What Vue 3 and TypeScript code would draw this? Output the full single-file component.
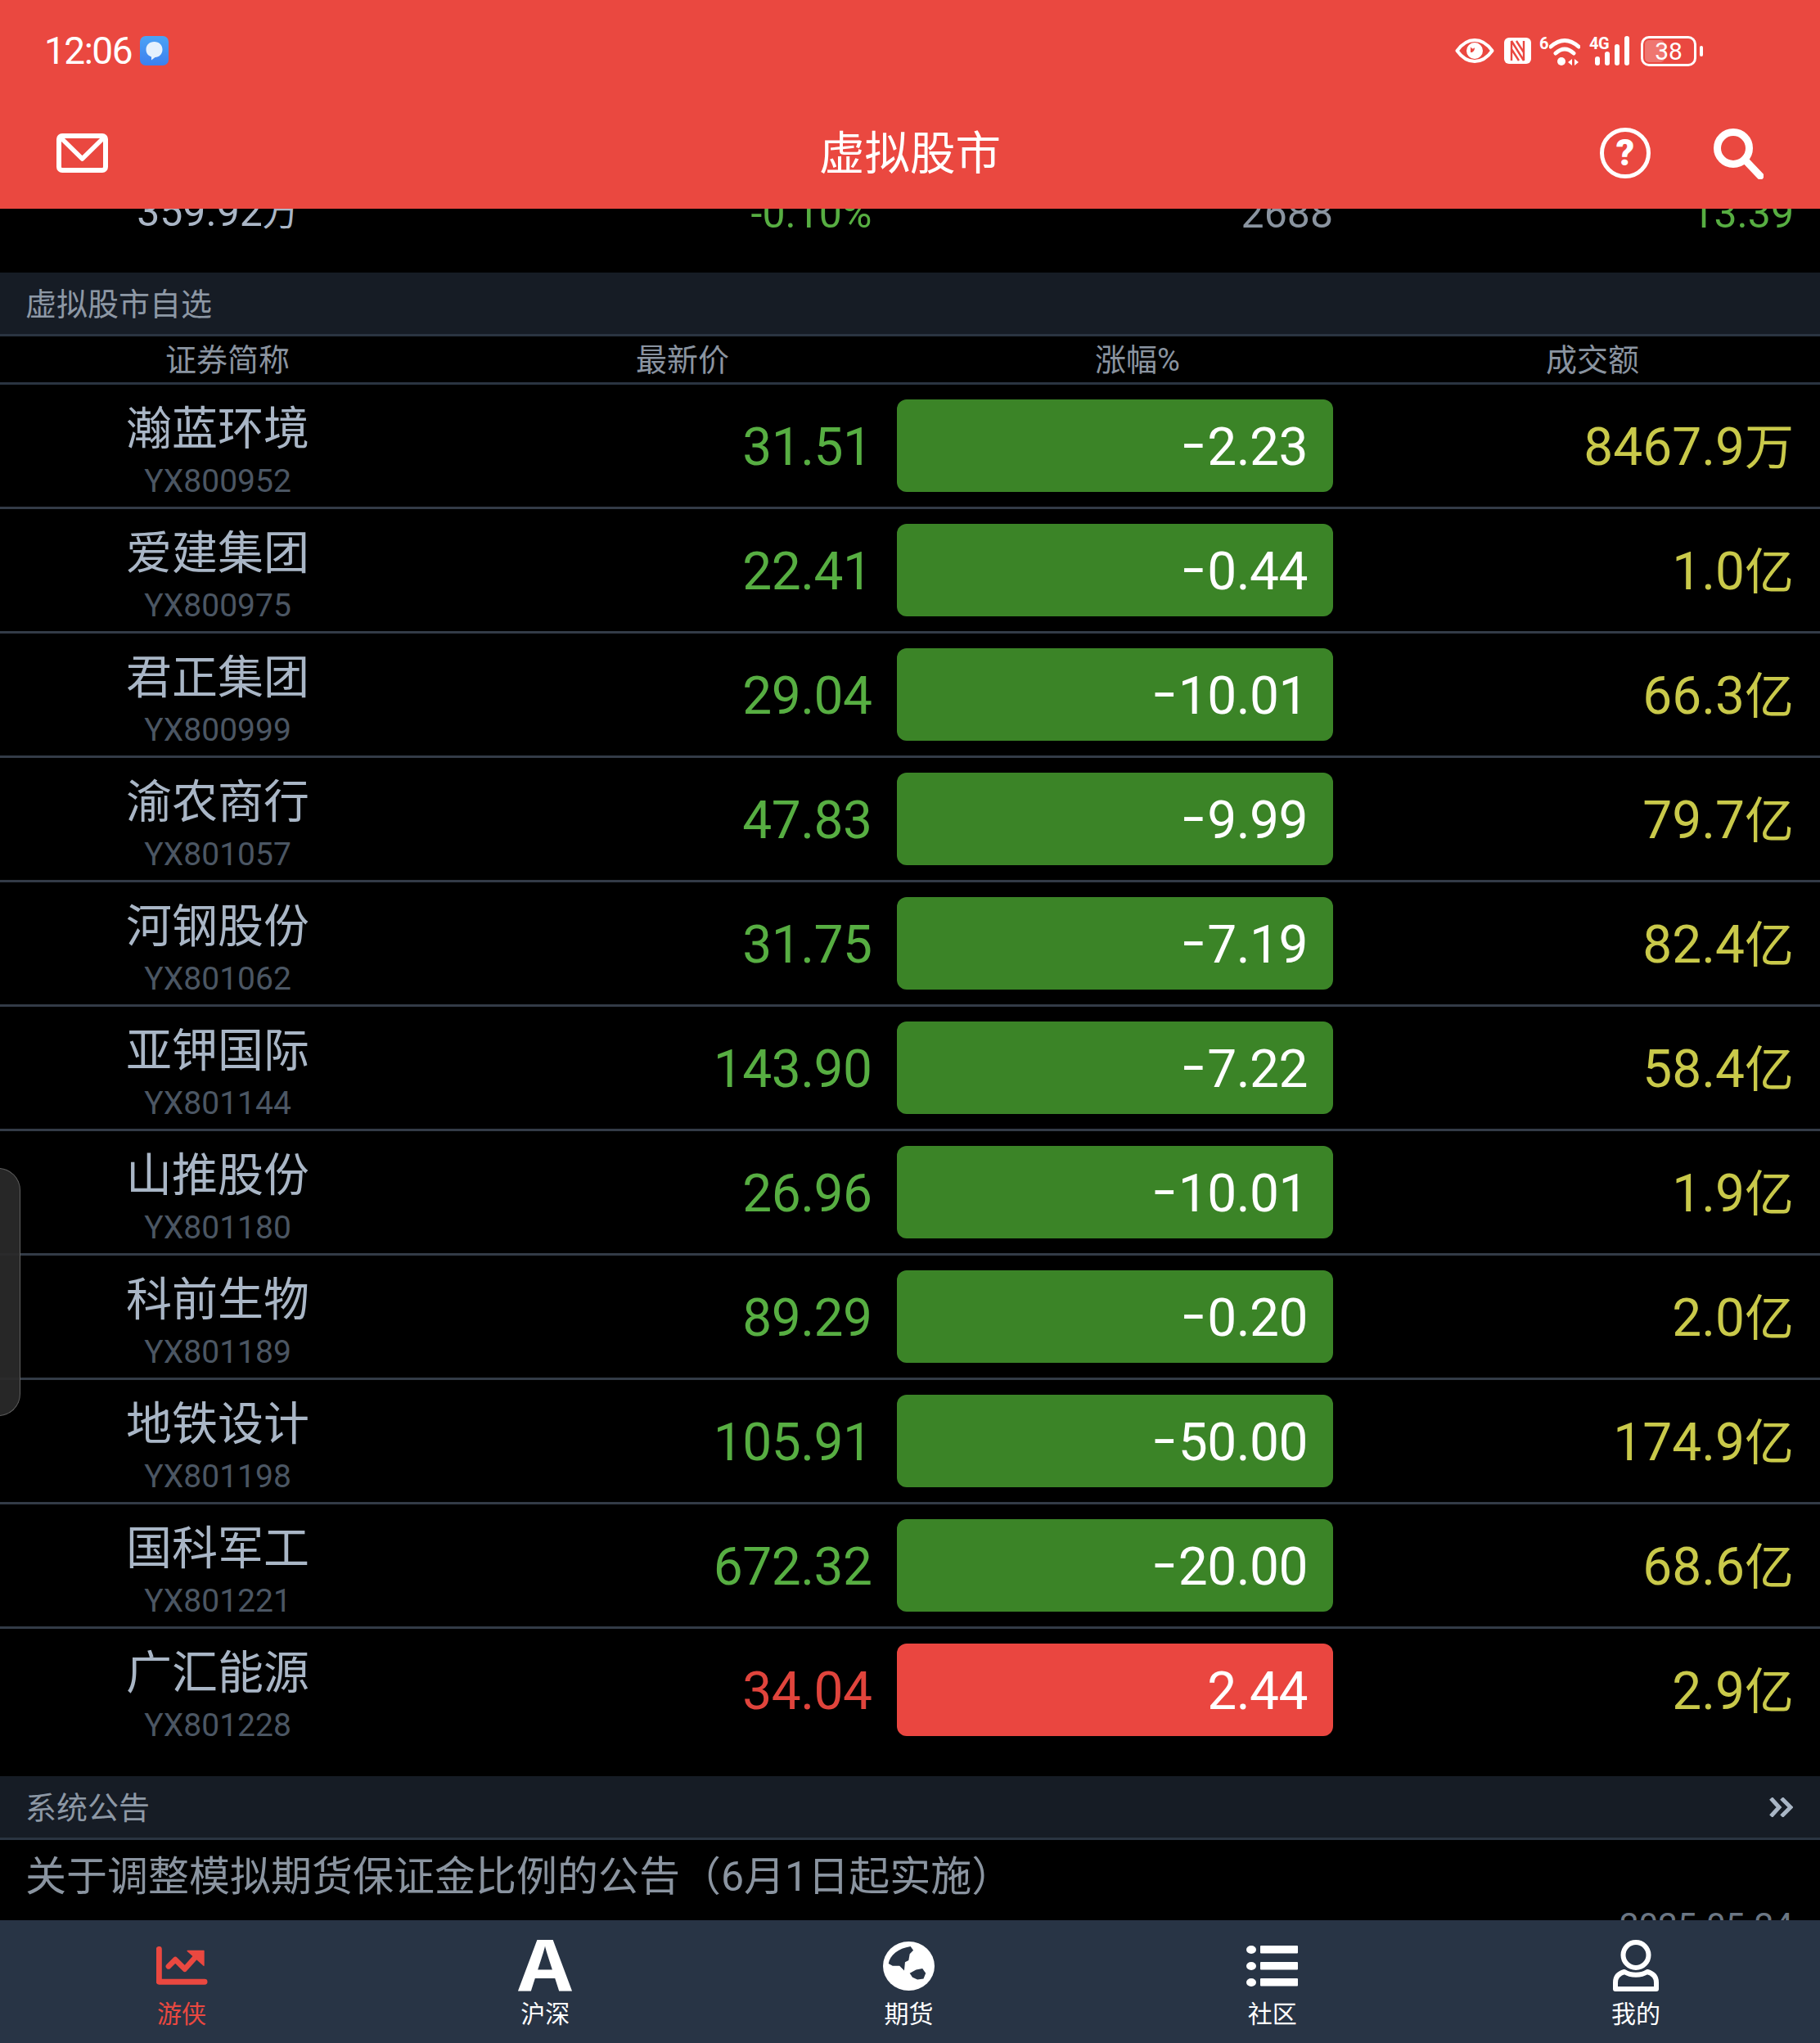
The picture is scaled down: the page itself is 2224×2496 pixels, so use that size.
<script setup lang="ts">
interface Stock {
  name: string
  code: string
  price: string
  change: string
  amount: string
  unit: string
  up?: boolean
}

const stocks: Stock[] = [
  { name: '瀚蓝环境', code: 'YX800952', price: '31.51', change: '-2.23', amount: '8467.9', unit: '万' },
  { name: '爱建集团', code: 'YX800975', price: '22.41', change: '-0.44', amount: '1.0', unit: '亿' },
  { name: '君正集团', code: 'YX800999', price: '29.04', change: '-10.01', amount: '66.3', unit: '亿' },
  { name: '渝农商行', code: 'YX801057', price: '47.83', change: '-9.99', amount: '79.7', unit: '亿' },
  { name: '河钢股份', code: 'YX801062', price: '31.75', change: '-7.19', amount: '82.4', unit: '亿' },
  { name: '亚钾国际', code: 'YX801144', price: '143.90', change: '-7.22', amount: '58.4', unit: '亿' },
  { name: '山推股份', code: 'YX801180', price: '26.96', change: '-10.01', amount: '1.9', unit: '亿' },
  { name: '科前生物', code: 'YX801189', price: '89.29', change: '-0.20', amount: '2.0', unit: '亿' },
  { name: '地铁设计', code: 'YX801198', price: '105.91', change: '-50.00', amount: '174.9', unit: '亿' },
  { name: '国科军工', code: 'YX801221', price: '672.32', change: '-20.00', amount: '68.6', unit: '亿' },
  { name: '广汇能源', code: 'YX801228', price: '34.04', change: '2.44', amount: '2.9', unit: '亿', up: true },
]

const columns = ['证券简称', '最新价', '涨幅%', '成交额']
</script>

<template>
  <div class="page">
    <header class="top">
      <div class="status">
        <div class="status-left">
          <span class="time">12:06</span>
          <svg class="msg" viewBox="0 0 35 36" width="35" height="36">
            <defs>
              <linearGradient id="msgGrad" x1="0" y1="0" x2="0" y2="1">
                <stop offset="0" stop-color="#4aa3f5" />
                <stop offset="1" stop-color="#3d80ef" />
              </linearGradient>
            </defs>
            <rect width="35" height="36" rx="7" fill="url(#msgGrad)" />
            <path d="M17.500 7c6 0 10 4 10 9.500S23.500 26 18.500 26L14 29.500V25.500C10 24 7.500 21 7.500 16.500 7.500 11 11.500 7 17.500 7Z" fill="#e4f1fd" />
          </svg>
        </div>
        <div class="status-right">
          <svg viewBox="0 0 48 30" width="48" height="30">
            <path d="M2.500 15C9 6 16 2 24 2s15 4 21.500 13C39 24 32 28 24 28S9 24 2.500 15Z" fill="none" stroke="#fff" stroke-width="4" stroke-linejoin="round" />
            <circle cx="24" cy="15" r="10" fill="#fff" />
            <path d="M19 10c1 3 4 3 5 1 0 4-2 6-5 6" fill="#ea4840" />
          </svg>
          <svg class="nfc" viewBox="0 0 33 32" width="33" height="32">
            <rect width="33" height="32" rx="6" fill="#fff" />
            <path d="M9 4v24M24 4v24M9 4l15 24M9 14l9 14M15 4l9 14" fill="none" stroke="#ea4840" stroke-width="2.400" />
          </svg>
          <span class="wifi">
            <span class="tiny six">6</span>
            <svg viewBox="0 0 38 34" width="38" height="34">
              <path d="M2 11Q19-4 36 11M8 19Q19 9 30 19" fill="none" stroke="#fff" stroke-width="5" stroke-linecap="round" />
              <circle cx="15" cy="29" r="5" fill="#fff" />
              <path d="M23 30l5-4v8zM31 26l5 4-5 4z" fill="#fff" />
            </svg>
          </span>
          <span class="signal">
            <span class="tiny four">4G</span>
            <svg viewBox="0 0 43 36" width="43" height="36">
              <rect x="0" y="25" width="6" height="11" rx="3" fill="#fff" />
              <rect x="12" y="19" width="6" height="17" rx="3" fill="#fff" />
              <rect x="24" y="10" width="6" height="26" rx="3" fill="#fff" />
              <rect x="36" y="0" width="6" height="36" rx="3" fill="#fff" />
            </svg>
          </span>
          <span class="battery">
            <span class="level"></span>
            <span class="pct">38</span>
            <span class="nub"></span>
          </span>
        </div>
      </div>
      <nav class="nav">
        <div class="nav-left">
          <svg viewBox="0 0 63 48" width="63" height="48">
            <rect x="3" y="3" width="57" height="42" rx="4" fill="none" stroke="#fff" stroke-width="6" />
            <path d="M6 6l25.500 25L57 6" fill="none" stroke="#fff" stroke-width="5.500" stroke-linejoin="round" />
          </svg>
        </div>
        <div class="title">虚拟股市</div>
        <div class="nav-right">
          <span class="help">?</span>
          <svg viewBox="0 0 62 63" width="62" height="63">
            <circle cx="25" cy="25" r="19.500" fill="none" stroke="#fff" stroke-width="9" />
            <path d="M39 39l19 20" stroke="#fff" stroke-width="9" stroke-linecap="round" />
          </svg>
        </div>
      </nav>
    </header>

    <main class="content">
      <div class="grid clipped">
        <span class="c-name cut-main">359.92<span class="cut-unit">万</span></span>
        <span class="c-right cut-green">-0.10%</span>
        <span class="c-right c-third cut-grey">2688</span>
        <span class="c-right c-last cut-green">13.39</span>
      </div>

      <div class="bar-title">虚拟股市自选</div>
      <div class="cols">
        <span v-for="c in columns" :key="c">{{ c }}</span>
      </div>

      <div v-for="(s, i) in stocks" :key="s.code" class="grid row" :class="{ last: i === stocks.length - 1 }">
        <div class="c-name">
          <div class="name">{{ s.name }}</div>
          <div class="code">{{ s.code }}</div>
        </div>
        <div class="c-right num price" :class="s.up ? 'red' : 'green'">{{ s.price }}</div>
        <div class="c-third-wrap">
          <div class="pill num" :class="s.up ? 'pill-up' : 'pill-down'">{{ s.change }}</div>
        </div>
        <div class="c-right c-last num price yellow">{{ s.amount }}<span class="unit">{{ s.unit }}</span></div>
      </div>

      <div class="bar-title notice">
        <span>系统公告</span>
        <svg class="more" viewBox="0 0 29 24" width="29" height="24">
          <path d="M2 1l10 11L2 23M15 1l11 11-11 11" fill="none" stroke="#a9b6c6" stroke-width="5" />
        </svg>
      </div>
      <div class="notice-item">
        <div class="notice-text">关于调整模拟期货保证金比例的公告（6月1日起实施）</div>
        <div class="notice-date">2025-05-24</div>
      </div>
    </main>

    <footer class="tabs">
      <div class="tab active">
        <span class="tab-icon">
          <svg viewBox="90 22 190 144" width="63" height="48">
            <path d="M100 32v120h168" fill="none" stroke="#ea4840" stroke-width="21" stroke-linecap="round" stroke-linejoin="round" />
            <path d="M135 95l25-25 35 35 45-50" fill="none" stroke="#ea4840" stroke-width="20" stroke-linejoin="round" stroke-linecap="round" />
            <path d="M205 38h60v54z" fill="#ea4840" stroke="#ea4840" stroke-width="4" stroke-linejoin="round" />
          </svg>
        </span>
        <span class="tab-label">游侠</span>
      </div>
      <div class="tab">
        <span class="tab-icon">
          <svg class="letter-svg" viewBox="0 0 66 63" width="66" height="63">
            <text class="letter" x="33" y="63" text-anchor="middle" textLength="66" lengthAdjust="spacingAndGlyphs">A</text>
          </svg>
        </span>
        <span class="tab-label">沪深</span>
      </div>
      <div class="tab">
        <span class="tab-icon">
          <svg viewBox="115 10 187 178" width="63" height="60">
            <ellipse cx="208.500" cy="99" rx="93.500" ry="89" fill="#fff" />
            <path d="M135 90C140 60 170 35 215 28l10 14-13 13-4 23-13 7-3 30-17-17h-25z" fill="#283445" />
            <path d="M212 125l23-13 23-4 12 17-8 20-22 3-18-8z" fill="#283445" />
          </svg>
        </span>
        <span class="tab-label">期货</span>
      </div>
      <div class="tab">
        <span class="tab-icon">
          <svg viewBox="0 0 63 50" width="63" height="50">
            <ellipse cx="6" cy="5" rx="6" ry="5" fill="#fff" />
            <rect x="17" y="0" width="46" height="9.500" rx="1" fill="#fff" />
            <ellipse cx="6" cy="25" rx="6" ry="5" fill="#fff" />
            <rect x="17" y="20" width="46" height="9.500" rx="1" fill="#fff" />
            <ellipse cx="6" cy="45" rx="6" ry="5" fill="#fff" />
            <rect x="17" y="40" width="46" height="9.500" rx="1" fill="#fff" />
          </svg>
        </span>
        <span class="tab-label">社区</span>
      </div>
      <div class="tab">
        <span class="tab-icon">
          <svg viewBox="0 0 56 63" width="56" height="63">
            <circle cx="28" cy="18.500" r="15.500" fill="none" stroke="#fff" stroke-width="6" />
            <path d="M3 60V52c0-7 4-11 11-13 8 5 20 5 28 0 7 2 11 6 11 13v8z" fill="none" stroke="#fff" stroke-width="6" stroke-linejoin="round" />
          </svg>
        </span>
        <span class="tab-label">我的</span>
      </div>
    </footer>

    <div class="handle"></div>
  </div>
</template>

<style>
html,
body {
  margin: 0;
  background: #000;
}
</style>

<style scoped>
.page {
  position: relative;
  display: flex;
  flex-direction: column;
  width: 2224px;
  height: 2496px;
  overflow: hidden;
  background: #000;
  font-family: Roboto, 'Noto Sans CJK SC', sans-serif;
  color: #fff;
}

.top {
  flex: none;
  height: 255px;
  background: #ea4840;
}

.status {
  display: flex;
  align-items: center;
  justify-content: space-between;
  height: 124px;
  padding: 0 143px 0 54px;
}

.status-left {
  display: flex;
  align-items: center;
  gap: 10px;
}

.time {
  font-size: 46px;
  line-height: 50px;
  letter-spacing: -1.500px;
}

.status-right {
  display: flex;
  align-items: center;
}

.nfc {
  margin-left: 12px;
}

.wifi {
  display: flex;
  align-items: flex-end;
  margin-left: 10px;
  height: 36px;
}

.tiny {
  font-size: 20px;
  font-weight: 700;
  line-height: 19px;
  align-self: flex-start;
}

.six {
  width: 12px;
}

.signal {
  position: relative;
  display: block;
  margin-left: 18px;
  height: 36px;
  width: 43px;
}

.four {
  position: absolute;
  left: -7px;
  top: 0;
  letter-spacing: -0.500px;
}

.battery {
  position: relative;
  display: flex;
  align-items: center;
  justify-content: center;
  box-sizing: border-box;
  width: 68px;
  height: 37px;
  margin-left: 13px;
  margin-right: 8px;
  border: 3px solid #fff;
  border-radius: 10px;
}

.level {
  position: absolute;
  left: 2px;
  top: 2px;
  bottom: 2px;
  width: 24px;
  border-radius: 5px;
  background: rgba(255, 255, 255, 0.25);
}

.pct {
  position: relative;
  font-size: 30px;
  line-height: 31px;
}

.nub {
  position: absolute;
  right: -11px;
  top: 9px;
  width: 4px;
  height: 13px;
  border-radius: 2px;
  background: #fff;
}

.nav {
  display: grid;
  grid-template-columns: 1fr auto 1fr;
  align-items: center;
  height: 126px;
  padding: 0 69px;
}

.nav-left {
  display: flex;
}

.title {
  padding-top: 4px;
  font-size: 55.500px;
  line-height: 70px;
}

.nav-right {
  display: flex;
  justify-content: flex-end;
  align-items: center;
  gap: 76px;
}

.help {
  display: flex;
  align-items: center;
  justify-content: center;
  box-sizing: border-box;
  width: 62px;
  height: 62px;
  border: 5.500px solid #fff;
  border-radius: 50%;
  font-size: 44px;
  font-weight: 900;
  line-height: 1;
}

.content {
  flex: 1;
  min-height: 0;
  overflow: hidden;
}

.grid {
  display: grid;
  grid-template-columns: 532px 533.500px 563.500px 1fr;
  align-items: center;
}

.clipped {
  box-sizing: border-box;
  height: 78px;
  padding-bottom: 43px;
  overflow: hidden;
  align-content: end;
  align-items: end;
  font-size: 50px;
  line-height: 58px;
}

.cut-main {
  color: #aab6c6;
}

.cut-unit {
  font-size: 44px;
}

.cut-green {
  color: #57ae42;
}

.cut-grey {
  color: #8a94a0;
}

.bar-title {
  display: flex;
  align-items: center;
  justify-content: space-between;
  height: 70px;
  padding: 0 33px 5px 31px;
  background: #161c25;
  border-bottom: 3px solid #2a3441;
  font-size: 38px;
  color: #8d98a5;
}

.more {
  margin-top: 5px;
}

.cols {
  display: grid;
  grid-template-columns: repeat(4, 1fr);
  align-items: center;
  height: 56px;
  border-bottom: 3px solid #2a3441;
  font-size: 38px;
  line-height: 58px;
  color: #8a94a0;
  text-align: center;
}

.row {
  height: 149px;
  border-bottom: 3px solid #333b47;
}

.row.last {
  border-bottom: 3px solid #000;
  margin-bottom: 28px;
}

.c-name {
  text-align: center;
}

.row .c-name {
  padding-top: 10px;
}

.name {
  font-size: 56px;
  line-height: 70px;
  color: #a9b6c6;
}

.code {
  margin-top: 6px;
  font-size: 39px;
  line-height: 46px;
  color: #4b5663;
}

.c-right {
  text-align: right;
}

.c-last {
  padding-right: 32px;
}

.num {
  font-size: 64px;
  line-height: 76px;
  letter-spacing: -0.500px;
}

.price {
  padding-top: 5px;
}

.green {
  color: #57ae42;
}

.red {
  color: #e0443c;
}

.yellow {
  color: #c9c94a;
  letter-spacing: 0;
}

.unit {
  font-size: 60px;
  letter-spacing: 0;
}

.c-third-wrap {
  padding-left: 30.500px;
}

.pill {
  height: 113px;
  padding-right: 31px;
  border-radius: 12px;
  color: #fff;
  line-height: 118px;
  text-align: right;
}

.pill-down {
  background: #3b8427;
}

.pill-down::first-letter {
  font-size: 96px;
  font-weight: 300;
  line-height: 0;
  letter-spacing: 3px;
  vertical-align: -7px;
}

.pill-up {
  background: #ea4640;
}

.notice-item {
  padding: 9px 31px 0;
}

.notice-text {
  font-size: 50px;
  line-height: 72px;
  color: #8a94a0;
}

.notice-date {
  padding-right: 2px;
  font-size: 42px;
  line-height: 48px;
  text-align: right;
  color: #6b7683;
}

.tabs {
  position: relative;
  flex: none;
  display: grid;
  grid-template-columns: repeat(5, 1fr);
  box-sizing: border-box;
  height: 150px;
  padding: 24px 3px 0 0;
  background: #283445;
}

.tab {
  display: flex;
  flex-direction: column;
  align-items: center;
}

.tab-icon {
  display: flex;
  align-items: center;
  justify-content: center;
  height: 63px;
}

.letter {
  font-family: 'Liberation Mono', monospace;
  font-size: 96px;
  font-weight: 700;
  fill: #fff;
}

.tab-label {
  margin-top: 10px;
  font-size: 30px;
  line-height: 36px;
}

.active .tab-label {
  color: #ea4840;
}

.handle {
  position: absolute;
  left: -2px;
  top: 1427px;
  width: 27px;
  height: 303px;
  box-sizing: border-box;
  border: 1px solid #5f5f5f;
  border-radius: 0 44px 44px 0;
  background: rgba(42, 42, 42, 0.92);
}
</style>
